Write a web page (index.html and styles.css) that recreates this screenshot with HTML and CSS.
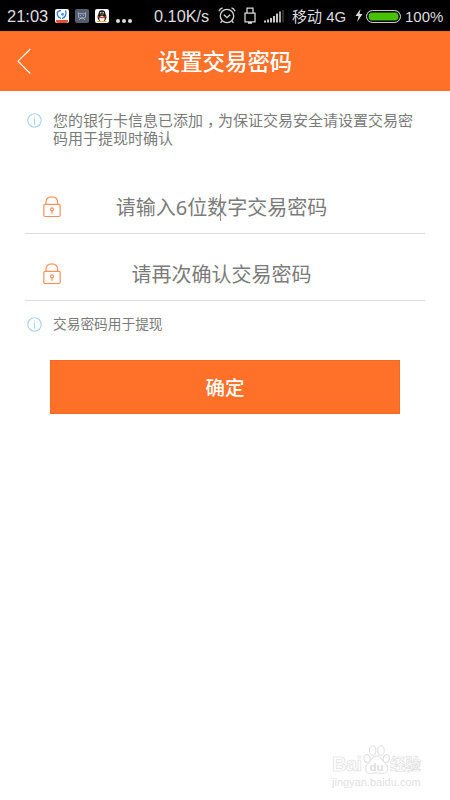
FILE: index.html
```html
<!DOCTYPE html>
<html lang="zh-CN">
<head>
<meta charset="utf-8">
<title>设置交易密码</title>
<link rel="stylesheet" href="styles.css">
</head>
<body>
<div class="status">
  <span class="time">21:03</span>
  <svg class="app" width="14" height="14" viewBox="0 0 14 14"><rect width="14" height="14" rx="2" fill="#fff"/><path d="M1 11h12v1q0 2-2 2H3q-2 0-2-2z" fill="#ed4b32"/><path d="M6 1.500C1 2 1 7 6 9.500M10.500 1.500c1.500 4-.5 7-3.500 8" fill="none" stroke="#2f7ce0" stroke-width="1.300"/><path d="M7 3.500l2 1-1 3-2-2z" fill="#4894ef"/></svg>
  <svg class="app" width="14" height="14" viewBox="0 0 14 14"><rect width="14" height="14" rx="2" fill="#555e70"/><path d="M3.500 3.500l1 1.200h5l1-1.200v4.500l-1 1h-5l-1-1zM4 11l2-2h2l2 2M5 6.500h1M8 6.500h1" fill="none" stroke="#b8bdc5" stroke-width=".8"/></svg>
  <svg class="app" width="14" height="14" viewBox="0 0 14 14"><rect width="14" height="14" rx="2" fill="#fff"/><ellipse cx="7" cy="8" rx="4.500" ry="4.500" fill="#171717"/><circle cx="7" cy="4.500" r="3.300" fill="#171717"/><ellipse cx="7" cy="9.700" rx="2.700" ry="2.700" fill="#fff"/><circle cx="5.800" cy="3.700" r=".8" fill="#fff"/><circle cx="8.200" cy="3.700" r=".8" fill="#fff"/><path d="M5 5.400h4L7 6.500z" fill="#f8ae20"/><path d="M3 7q4 2 8 0v1.300q-4 2-8 0z" fill="#e93232"/><path d="M2.500 12.500h4M7.500 12.500h4" stroke="#f5a51e" stroke-width="1.200"/></svg>
  <span class="dots"><i></i><i></i><i></i></span>
  <span class="speed">0.10K/s</span>
  <svg class="alarm" width="18" height="18" viewBox="0 0 18 18" fill="none" stroke="#d8d8d8" stroke-width="1.300"><circle cx="9" cy="9" r="6.700"/><path d="M5.800 7.700l3.200 3 3.200-3M1 4.200Q2 1.700 4.500.9M17 4.200Q16 1.700 13.500.9M4 14.200l-1.500 1.500M14 14.200l1.500 1.500"/></svg>
  <svg class="usb" width="12" height="18" viewBox="0 0 12 18" fill="none" stroke="#d8d8d8" stroke-width="1.300"><path d="M3 6V1.200h6V6M1 6.200h10v8.600H1zM4 16h4"/></svg>
  <svg class="signal" width="20" height="14" viewBox="0 0 20 14"><path d="M1 13.500v-2M4 13.500v-3M7 13.500V9M10 13.500V7M13 13.500V4.500" stroke="#dedede" stroke-width="1.800"/><path d="M16 13.500V2.500" stroke="#dedede" stroke-width="1.500"/><path d="M19 13.500V1" stroke="#3c3c3c" stroke-width="1.500"/></svg>
  <span class="carrier">移动 4G</span>
  <svg class="bolt" width="8" height="14" viewBox="0 0 8 14"><path d="M5.500 0L.5 7h3L2.200 13 7.500 5h-3z" fill="#dedede"/></svg>
  <span class="battery"></span>
  <span class="percent">100%</span>
</div>
<header class="header">
  <svg class="back" width="16" height="28" viewBox="0 0 16 28"><path d="M14.300 1L2 13.200l12.300 12.300" fill="none" stroke="#fff" stroke-width="1.100"/></svg>
  <h1 class="title">设置交易密码</h1>
</header>
<main class="content">
  <div class="notice">
    <svg class="info" width="15" height="15" viewBox="0 0 15 15" fill="none" stroke="#a5d4f1" stroke-width="1.100"><circle cx="7.500" cy="7.500" r="6.700"/><path d="M7.500 3.500v1.200M7.500 5.700v6"/></svg>
    <p class="notice-text">您的银行卡信息已添加<span class="comma">，</span>为保证交易安全请设置交易密码用于提现时确认</p>
  </div>
  <div class="field field-first">
    <svg class="lock" width="18" height="22" viewBox="0 0 18 22" fill="none" stroke="#ff8f5c" stroke-width="1.200"><rect x=".8" y="8.300" width="16.400" height="12.200" rx="1.500"/><path d="M3 8V6.500Q3 .8 8.800.8T14.600 6.500V8"/><circle cx="9" cy="13.300" r="1.500"/><path d="M9 14.700v3"/></svg>
    <span class="placeholder">请输入<span class="digit">6</span>位<span class="caret"></span>数字交易密码</span>
  </div>
  <div class="field">
    <svg class="lock" width="18" height="22" viewBox="0 0 18 22" fill="none" stroke="#ff8f5c" stroke-width="1.200"><rect x=".8" y="8.300" width="16.400" height="12.200" rx="1.500"/><path d="M3 8V6.500Q3 .8 8.800.8T14.600 6.500V8"/><circle cx="9" cy="13.300" r="1.500"/><path d="M9 14.700v3"/></svg>
    <span class="placeholder">请再次确认交易密码</span>
  </div>
  <div class="notice notice-small">
    <svg class="info" width="15" height="15" viewBox="0 0 15 15" fill="none" stroke="#a5d4f1" stroke-width="1.100"><circle cx="7.500" cy="7.500" r="6.700"/><path d="M7.500 3.500v1.200M7.500 5.700v6"/></svg>
    <p class="notice-text">交易密码用于提现</p>
  </div>
  <button class="submit">确定</button>
</main>
<footer class="watermark">
  <div class="brand">
    <span class="brand-latin">Bai</span>
    <svg class="paw" width="27" height="30" viewBox="0 0 27 30"><g fill="#fff" stroke="#dedede" stroke-width="1"><ellipse cx="4" cy="13.500" rx="3" ry="4" transform="rotate(-15 4 13.500)"/><ellipse cx="9.700" cy="5.500" rx="3.200" ry="4.700"/><ellipse cx="18" cy="5.500" rx="3.200" ry="4.700"/><ellipse cx="23.300" cy="13.500" rx="3" ry="4" transform="rotate(15 23.300 13.500)"/><path d="M13.500 11C9 11 8 16 4.500 19c-4 4-1 10 3 9.500 4-.7 8-.7 12 0 5 .5 7-5.500 3.500-9.500C19 16 18 11 13.500 11z"/></g><text class="du" x="6.500" y="26">du</text></svg>
    <span class="brand-cn">经验</span>
  </div>
  <div class="domain">jingyan.baidu.com</div>
</footer>
</body>
</html>
```
FILE: styles.css
```css
* { box-sizing: border-box; }
body {
  width: 450px;
  height: 800px;
  margin: 0;
  display: flex;
  flex-direction: column;
  overflow: hidden;
  background: #fff;
  color: #7b7b7b;
  font-family: "Liberation Sans", "Noto Sans CJK SC", sans-serif;
}
svg { display: block; flex: none; }
.status {
  height: 31px;
  flex: none;
  display: flex;
  align-items: center;
  padding: 1px 0 0 7px;
  background: #000;
  color: #dedede;
  font-size: 16.300px;
  line-height: 28px;
  white-space: nowrap;
}
.time { width: 48px; font-size: 16.500px; }
.app { margin-right: 6px; }
.dots { display: flex; gap: 2px; width: 39px; padding: 9px 0 0 1px; }
.dots i { width: 4px; height: 4px; border-radius: 50%; background: #dedede; }
.speed { width: 64px; }
.alarm { margin-right: 8px; }
.usb { margin-right: 8px; }
.signal { margin-right: 8px; }
.carrier { width: 63px; padding-top: 1px; font-size: 15px; }
.bolt { margin-right: 3px; }
.battery {
  width: 35px;
  height: 13px;
  flex: none;
  margin-right: 4px;
  border: 1px solid #d0d0d0;
  border-radius: 7px;
  background: #46c108;
  box-shadow: inset 0 0 0 1.500px #000;
}
.percent { padding-top: 1px; font-size: 15px; }
.header {
  height: 60px;
  flex: none;
  display: grid;
  grid-template-columns: 50px 1fr 50px;
  align-items: center;
  background: #ff7028;
  border-top: 1px solid #f36720;
  color: #fff;
}
.back { margin-left: 16px; }
.title { margin: 2px 0 0; text-align: center; font-size: 22.400px; font-weight: 500; line-height: 32px; }
.content { flex: 1; padding: 20px 25px 0; }
.notice { display: flex; gap: 11px; padding-left: 2px; }
.info { margin-top: 2px; }
.notice-text { width: 361px; margin: 1px 0 -1px; font-size: 15px; line-height: 18px; }
.comma { display: inline-block; width: 15px; text-indent: 4px; white-space: nowrap; }
.field {
  height: 67px;
  display: flex;
  align-items: center;
  padding: 13px 18px 0;
  border-bottom: 1px solid #dedede;
}
.field-first { margin-top: 20px; }
.placeholder { flex: 1; margin: 3px 25px 0 0; text-align: center; font-size: 20px; line-height: 28px; }
.digit { font-family: "Noto Sans", sans-serif; line-height: 1; }
.caret {
  display: inline-block;
  width: 1px;
  height: 27px;
  margin: -4px -1px 0 0;
  vertical-align: middle;
  position: relative;
  left: 13px;
  background: #8c8c8c;
}
.notice-small { margin-top: 14px; }
.notice-small .notice-text { font-size: 13.700px; }
.submit {
  display: block;
  width: 350px;
  height: 54px;
  margin: 27px 25px 0;
  padding: 0;
  border: 1px solid #f56a22;
  background: #ff7028;
  color: #fff;
  font: 500 19.500px/28px "Noto Sans CJK SC", sans-serif;
}
.watermark { width: 95px; height: 56px; margin-left: 332px; color: #fff; }
.brand {
  display: flex;
  align-items: flex-end;
  height: 31px;
  font-size: 20px;
  font-weight: 700;
  line-height: 21px;
  -webkit-text-stroke: 0.600px #dcdcdc;
}
.brand-latin { width: 31px; font-size: 20px; letter-spacing: -0.500px; }
.paw { margin: 0; }
.du { font: 700 11.500px "Liberation Sans", sans-serif; fill: #dedede; -webkit-text-stroke: 0; }
.brand-cn { font-size: 15.500px; }
.domain { font-size: 11px; line-height: 14px; letter-spacing: 0; color: #e2e2e2; }
```
